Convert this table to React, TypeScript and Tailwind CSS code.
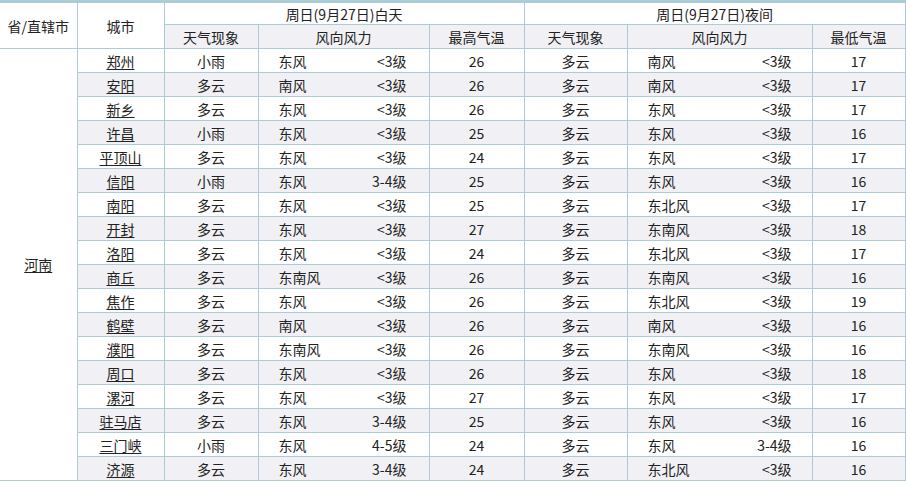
import React from "react";

type Row = [string, string, string, string, string, string, string, string, string, string];

const rows: Row[] = [
  ["郑州", "小雨", "东风", "<3级", "26", "多云", "南风", "<3级", "17", ""],
  ["安阳", "多云", "南风", "<3级", "26", "多云", "南风", "<3级", "17", ""],
  ["新乡", "多云", "东风", "<3级", "26", "多云", "东风", "<3级", "17", ""],
  ["许昌", "小雨", "东风", "<3级", "25", "多云", "东风", "<3级", "16", ""],
  ["平顶山", "多云", "东风", "<3级", "24", "多云", "东风", "<3级", "17", ""],
  ["信阳", "小雨", "东风", "3-4级", "25", "多云", "东风", "<3级", "16", ""],
  ["南阳", "多云", "东风", "<3级", "25", "多云", "东北风", "<3级", "17", ""],
  ["开封", "多云", "东风", "<3级", "27", "多云", "东南风", "<3级", "18", ""],
  ["洛阳", "多云", "东风", "<3级", "24", "多云", "东北风", "<3级", "17", ""],
  ["商丘", "多云", "东南风", "<3级", "26", "多云", "东南风", "<3级", "16", ""],
  ["焦作", "多云", "东风", "<3级", "26", "多云", "东北风", "<3级", "19", ""],
  ["鹤壁", "多云", "南风", "<3级", "26", "多云", "南风", "<3级", "16", ""],
  ["濮阳", "多云", "东南风", "<3级", "26", "多云", "东南风", "<3级", "16", ""],
  ["周口", "多云", "东风", "<3级", "26", "多云", "东风", "<3级", "18", ""],
  ["漯河", "多云", "东风", "<3级", "27", "多云", "东风", "<3级", "17", ""],
  ["驻马店", "多云", "东风", "3-4级", "25", "多云", "东风", "<3级", "16", ""],
  ["三门峡", "小雨", "东风", "4-5级", "24", "多云", "东风", "3-4级", "16", ""],
  ["济源", "多云", "东风", "3-4级", "24", "多云", "东北风", "<3级", "16", ""],
];

const B = "border border-[#a9ccd6]";

export default function App() {
  return (
    <div
      className="w-[906px] h-[483px] bg-white overflow-hidden text-[14px] text-[#222]"
      style={{ fontFamily: '"Noto Sans CJK SC", "Noto Sans", sans-serif' }}
    >
      <table className="border-collapse table-fixed w-[905px] border-t-[3px] border-t-[#a9ccd6]">
        <colgroup>
          <col className="w-[77px]" />
          <col className="w-[87px]" />
          <col className="w-[94px]" />
          <col className="w-[171px]" />
          <col className="w-[95px]" />
          <col className="w-[103px]" />
          <col className="w-[185px]" />
          <col className="w-[93px]" />
        </colgroup>
        <thead>
          <tr className="h-[23px]">
            <th rowSpan={2} className={`${B} border-l-0 border-t-0 font-normal text-center p-0 leading-none`}>
              省/直辖市
            </th>
            <th rowSpan={2} className={`${B} border-t-0 font-normal text-center p-0 leading-none`}>
              城市
            </th>
            <th colSpan={3} className={`${B} border-t-0 font-normal text-center p-0 leading-none`}>
              周日(9月27日)白天
            </th>
            <th colSpan={3} className={`${B} border-t-0 font-normal text-center p-0 leading-none`}>
              周日(9月27日)夜间
            </th>
          </tr>
          <tr className="h-[24px] bg-[#f1f1f5]">
            <th className={`${B} font-normal text-center p-0 leading-none`}>天气现象</th>
            <th className={`${B} font-normal text-center p-0 leading-none`}>风向风力</th>
            <th className={`${B} font-normal text-center p-0 leading-none`}>最高气温</th>
            <th className={`${B} font-normal text-center p-0 leading-none`}>天气现象</th>
            <th className={`${B} font-normal text-center p-0 leading-none`}>风向风力</th>
            <th className={`${B} font-normal text-center p-0 leading-none`}>最低气温</th>
          </tr>
        </thead>
        <tbody>
          {rows.map((r, i) => (
            <tr key={r[0]} className={`h-[24px] ${i % 2 === 1 ? "bg-[#f1f1f5]" : "bg-white"}`}>
              {i === 0 && (
                <td rowSpan={rows.length} className={`${B} border-l-0 bg-white text-center p-0`}>
                  <span className="underline underline-offset-2">河南</span>
                </td>
              )}
              <td className={`${B} text-center p-0 leading-none`}>
                <span className="underline underline-offset-2">{r[0]}</span>
              </td>
              <td className={`${B} text-center p-0 leading-none`}>{r[1]}</td>
              <td className={`${B} p-0 leading-none`}>
                <div className="flex justify-between pl-[20px] pr-[22px]">
                  <span>{r[2]}</span>
                  <span>{r[3]}</span>
                </div>
              </td>
              <td className={`${B} text-center p-0 leading-none`}>{r[4]}</td>
              <td className={`${B} text-center p-0 leading-none`}>{r[5]}</td>
              <td className={`${B} p-0 leading-none`}>
                <div className="flex justify-between pl-[20px] pr-[20px]">
                  <span>{r[6]}</span>
                  <span>{r[7]}</span>
                </div>
              </td>
              <td className={`${B} text-center p-0 leading-none`}>{r[8]}</td>
            </tr>
          ))}
        </tbody>
      </table>
    </div>
  );
}
